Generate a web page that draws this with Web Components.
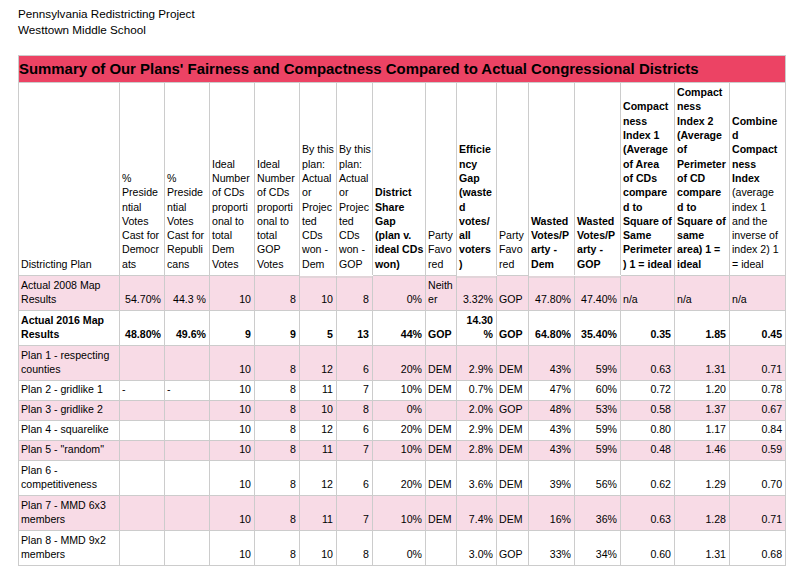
<!DOCTYPE html>
<html>
<head>
<meta charset="utf-8">
<title>Summary of Our Plans</title>
<style>
  html, body { margin: 0; background: #fff; }
</style>
</head>
<body>
<fairness-page>
  <span slot="line">Pennsylvania Redistricting Project</span>
  <span slot="line">Westtown Middle School</span>
  <fairness-table>Summary of Our Plans' Fairness and Compactness Compared to Actual Congressional Districts</fairness-table>
</fairness-page>
<script>
const widths = [101, 45, 45, 45, 45, 37, 36, 53, 31, 40, 32, 46, 46, 54, 55, 56];

// line breaks follow the sheet's narrow columns, | marks a break
const headers = [
  ["Districting Plan"],
  ["%|Preside|ntial|Votes|Cast for|Democr|ats"],
  ["%|Preside|ntial|Votes|Cast for|Republi|cans"],
  ["Ideal|Number|of CDs|proporti|onal to|total|Dem|Votes"],
  ["Ideal|Number|of CDs|proporti|onal to|total|GOP|Votes"],
  ["By this|plan:|Actual|or|Projec|ted|CDs|won -|Dem"],
  ["By this|plan:|Actual|or|Projec|ted|CDs|won -|GOP"],
  ["District|Share|Gap|(plan v.|ideal CDs|won)", 1],
  ["Party|Favo|red"],
  ["Efficie|ncy|Gap|(waste|d|votes/|all|voters|)", 1],
  ["Party|Favo|red"],
  ["Wasted|Votes/P|arty -|Dem", 1],
  ["Wasted|Votes/P|arty -|GOP", 1],
  ["Compact|ness|Index 1|(Average|of Area|of CDs|compare|d to|Square of|Same|Perimeter|) 1 = ideal", 1],
  ["Compact|ness|Index 2|(Average|of|Perimeter|of CD|compare|d to|Square of|same|area) 1 =|ideal", 1],
  ["<b>Combine|d|Compact|ness|Index</b>|(average|index 1|and the|inverse of|index 2) 1|= ideal"],
];

// left aligned columns, the rest go right
const leftCols = [0, 8, 10];

// the rule under the header sits 1px lower in these columns
const lowCols = [5, 6, 9, 11, 12];

const rows = [
  { h: 35, cells: ["Actual 2008 Map Results", "54.70%", "44.3 %", "10", "8", "10", "8", "0%", "Neither", "3.32%", "GOP", "47.80%", "47.40%", "n/a", "n/a", "n/a"] },
  { h: 35, bold: true, cells: ["Actual 2016 Map Results", "48.80%", "49.6%", "9", "9", "5", "13", "44%", "GOP", "14.30%", "GOP", "64.80%", "35.40%", "0.35", "1.85", "0.45"] },
  { h: 35, cells: ["Plan 1 - respecting counties", "", "", "10", "8", "12", "6", "20%", "DEM", "2.9%", "DEM", "43%", "59%", "0.63", "1.31", "0.71"] },
  { h: 20, cells: ["Plan 2 - gridlike 1", "-", "-", "10", "8", "11", "7", "10%", "DEM", "0.7%", "DEM", "47%", "60%", "0.72", "1.20", "0.78"] },
  { h: 20, cells: ["Plan 3 - gridlike 2", "", "", "10", "8", "10", "8", "0%", "", "2.0%", "GOP", "48%", "53%", "0.58", "1.37", "0.67"] },
  { h: 20, cells: ["Plan 4 - squarelike", "", "", "10", "8", "12", "6", "20%", "DEM", "2.9%", "DEM", "43%", "59%", "0.80", "1.17", "0.84"] },
  { h: 20, cells: ["Plan 5 - \"random\"", "", "", "10", "8", "11", "7", "10%", "DEM", "2.8%", "DEM", "43%", "59%", "0.48", "1.46", "0.59"] },
  { h: 35, cells: ["Plan 6 - competitiveness", "", "", "10", "8", "12", "6", "20%", "DEM", "3.6%", "DEM", "39%", "56%", "0.62", "1.29", "0.70"] },
  { h: 35, cells: ["Plan 7 - MMD 6x3 members", "", "", "10", "8", "11", "7", "10%", "DEM", "7.4%", "DEM", "16%", "36%", "0.63", "1.28", "0.71"] },
  { h: 35, cells: ["Plan 8 - MMD 9x2 members", "", "", "10", "8", "10", "8", "0%", "", "3.0%", "GOP", "33%", "34%", "0.60", "1.31", "0.68"] },
];

const tableCss = `
  :host {
    display: block;
    width: 768px;
    font: 10.6px/14px "Liberation Sans", Arial, sans-serif;
    color: #000;
  }
  table {
    width: 768px;
    table-layout: fixed;
    border-collapse: collapse;
  }
  td {
    border: 1px solid #ccc;
    padding: 0 3px 4px 2px;
    vertical-align: bottom;
    text-align: right;
    font-weight: normal;
    overflow-wrap: break-word;
  }
  td.left { text-align: left; }
  .head td {
    text-align: left;
    line-height: 14.3px;
    padding-right: 0;
    padding-bottom: 4px;
    white-space: nowrap;
    overflow: hidden;
  }
  .head .bold { font-weight: bold; }
  .head td.low { border-bottom-color: #fff; }
  tr.bold td { font-weight: bold; }
  tr.pink td { background: #f8dbe6; }
  tr.pink td.low { background: linear-gradient(#ccc 1px, #f8dbe6 1px); }
  td.title {
    background: #ec4364;
    font-size: 14.93px;
    line-height: 18px;
    font-weight: bold;
    text-align: left;
    vertical-align: middle;
    padding: 0;
    white-space: nowrap;
  }
`;

class FairnessTable extends HTMLElement {
  constructor() {
    super();
    this.attachShadow({ mode: "open" });
  }

  connectedCallback() {
    const cols = widths.map((w) => `<col style="width:${w}px">`).join("");
    const head = headers
      .map(([text, bold], n) => {
        const cls = (bold ? "bold " : "") + (lowCols.includes(n) ? "low" : "");
        return `<td class="${cls}">${text.split("|").join("<br>")}</td>`;
      })
      .join("");
    const body = rows
      .map((row, i) => {
        const cells = row.cells
          .map((c, n) => {
            const left = leftCols.includes(n) || (i === 0 && n >= 13) || c === "-";
            const low = i === 0 && lowCols.includes(n);
            return `<td class="${left ? "left " : ""}${low ? "low" : ""}">${c}</td>`;
          })
          .join("");
        const cls = (i % 2 === 0 ? "pink " : "") + (row.bold ? "bold" : "");
        return `<tr class="${cls}" style="height:${row.h}px">${cells}</tr>`;
      })
      .join("");
    this.shadowRoot.innerHTML = `
      <style>${tableCss}</style>
      <table>
        <colgroup>${cols}</colgroup>
        <tr style="height:27px"><td class="title" colspan="16"><slot></slot></td></tr>
        <tr class="head" style="height:193px">${head}</tr>
        ${body}
      </table>
    `;
  }
}

class FairnessPage extends HTMLElement {
  constructor() {
    super();
    this.attachShadow({ mode: "open" });
  }

  connectedCallback() {
    this.shadowRoot.innerHTML = `
      <style>
        :host {
          display: block;
          padding: 6px 0 0 18px;
          font: 11.7px/16px "Liberation Sans", Arial, sans-serif;
          color: #000;
        }
        .lines {
          display: flex;
          flex-direction: column;
          margin-bottom: 17px;
        }
      </style>
      <div class="lines"><slot name="line"></slot></div>
      <slot></slot>
    `;
  }
}

customElements.define("fairness-table", FairnessTable);
customElements.define("fairness-page", FairnessPage);
</script>
</body>
</html>
